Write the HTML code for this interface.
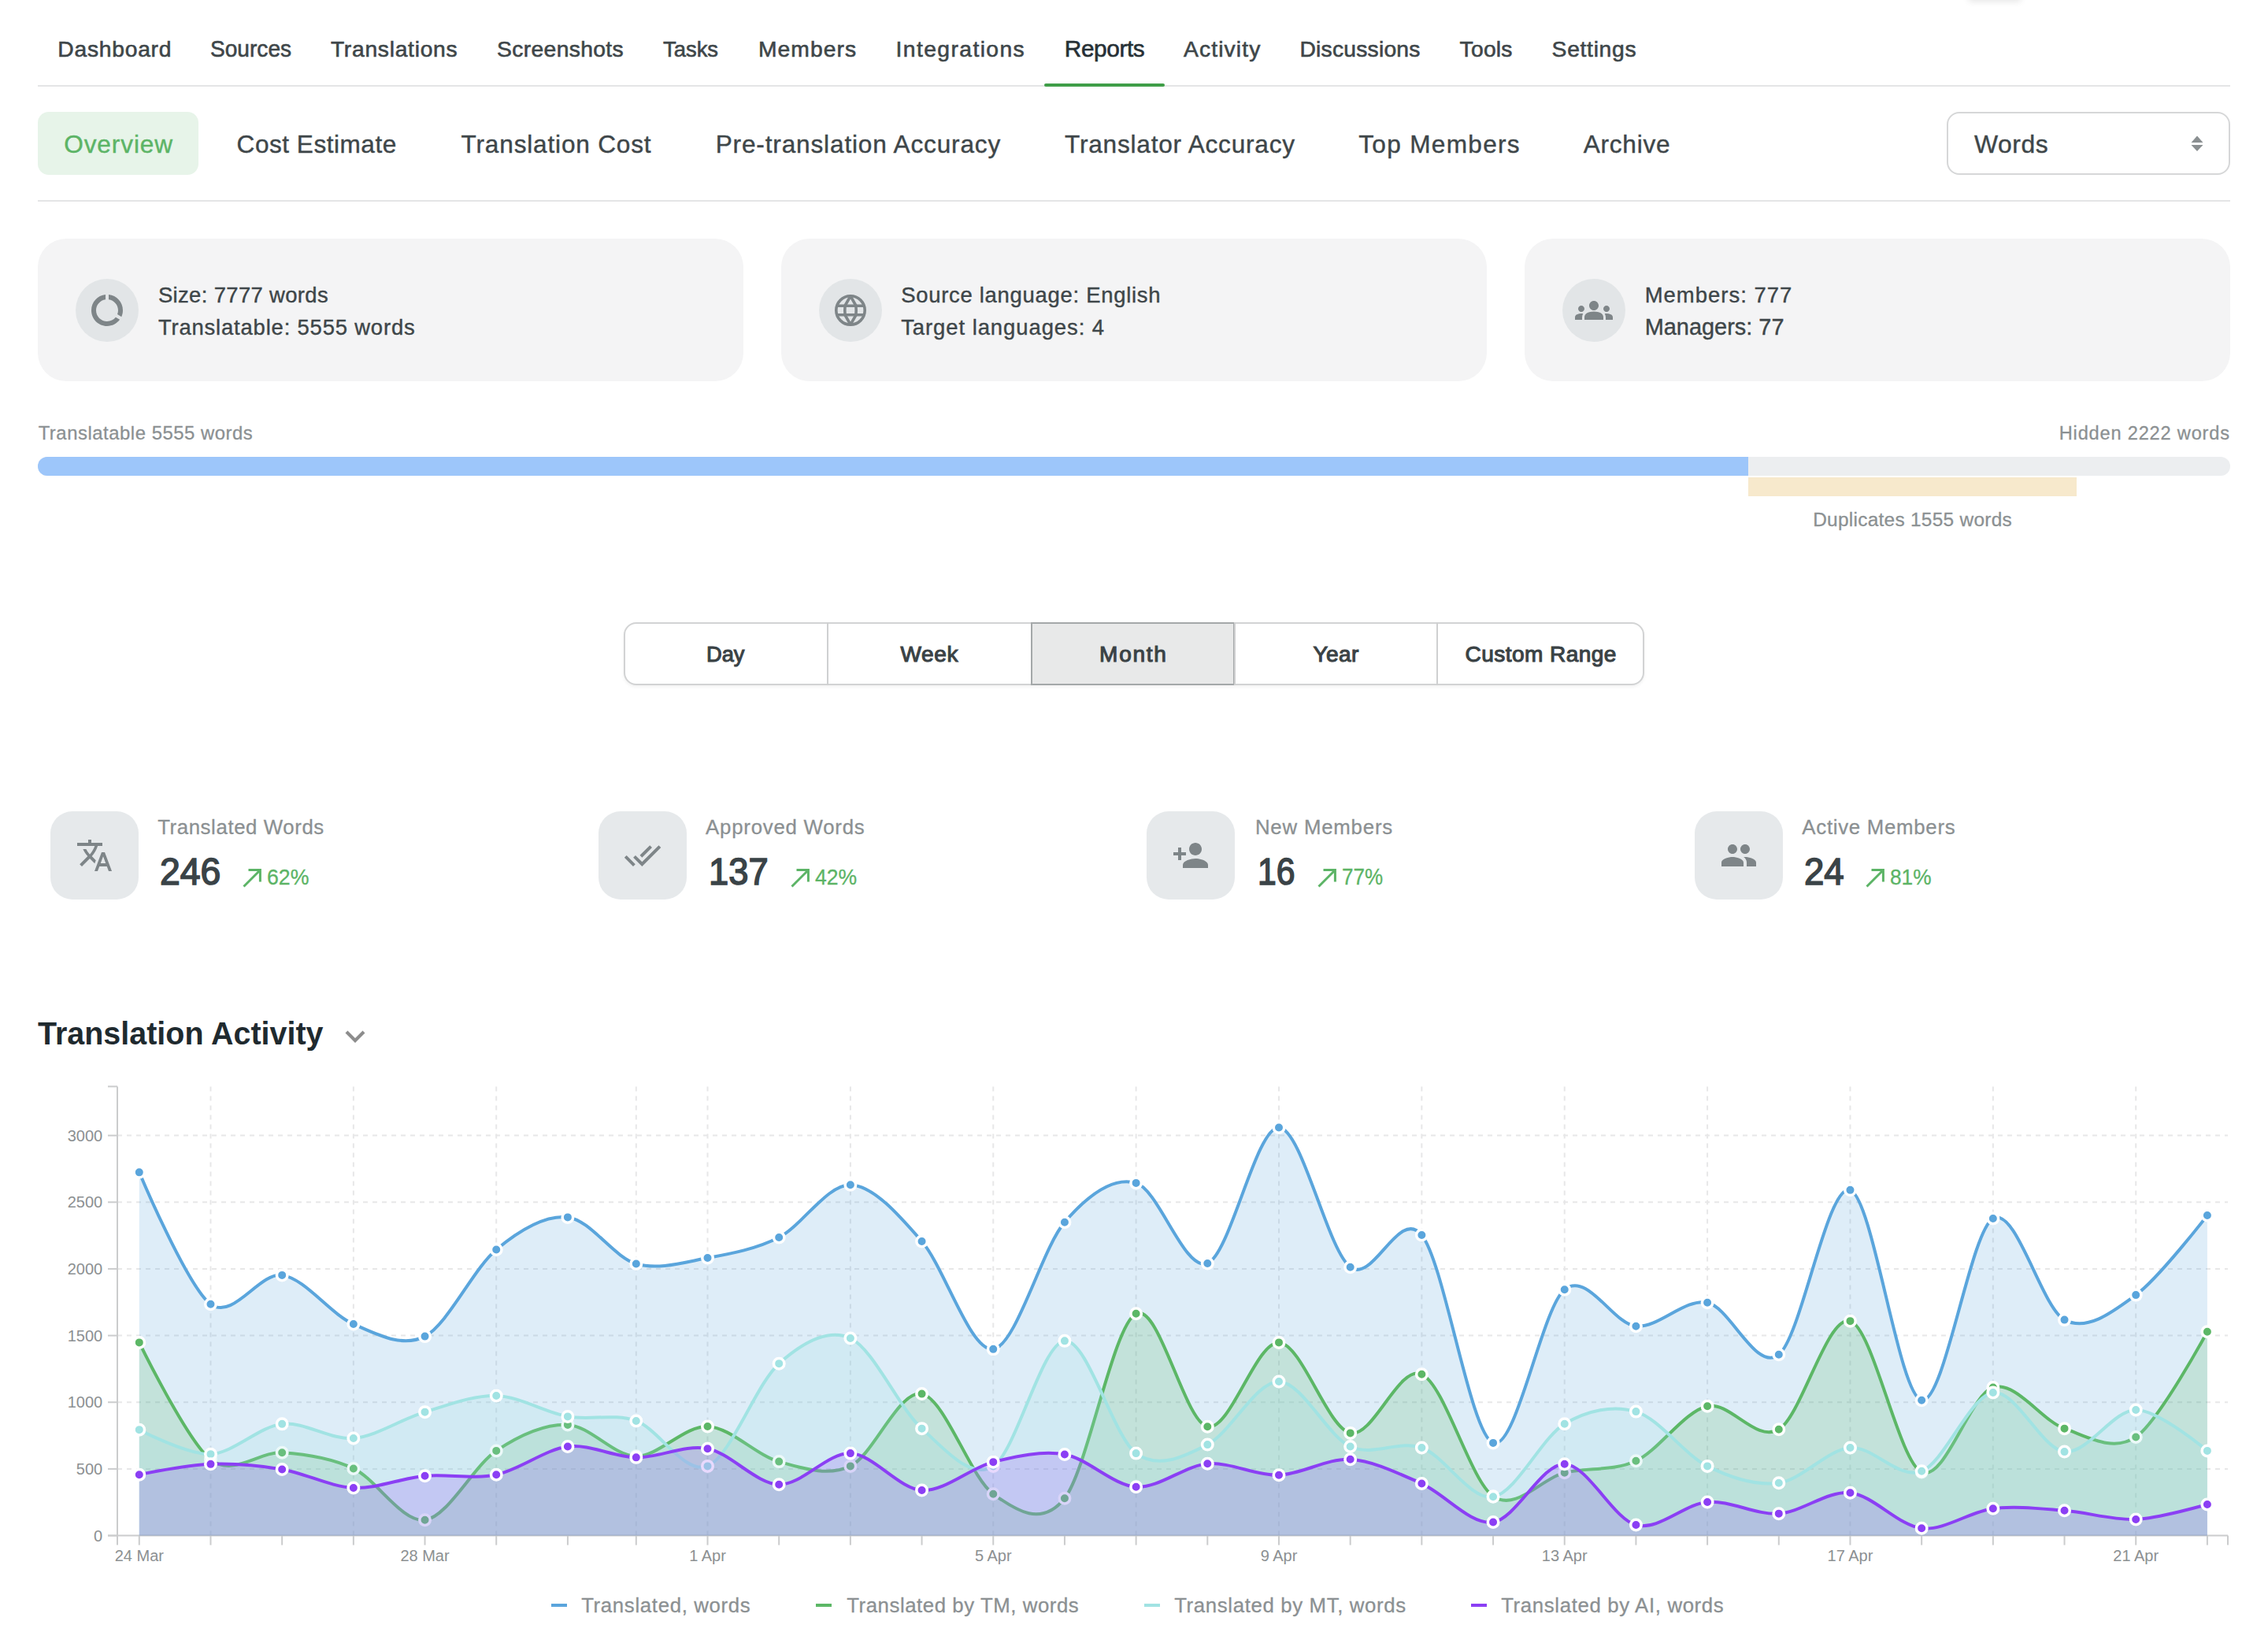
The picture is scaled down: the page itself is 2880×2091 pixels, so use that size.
<!DOCTYPE html>
<html><head><meta charset="utf-8"><style>
html,body{margin:0;padding:0;background:#fff;width:2880px;height:2091px;overflow:hidden}
body{position:relative;font-family:"Liberation Sans",sans-serif}
.t{position:absolute;white-space:nowrap}
.bx{position:absolute;display:block}
</style></head><body>
<div class="bx" style="left:2500px;top:-40px;width:66px;height:40px;background:#fff;box-shadow:0 2px 8px rgba(0,0,0,0.10)"></div>
<div class="t" style="left:73.30px;top:47.86px;font-size:28.28px;line-height:28.28px;letter-spacing:0.734px;color:#3e4649;font-weight:400;-webkit-text-stroke:0.60px #3e4649;">Dashboard</div>
<div class="t" style="left:267.30px;top:46.82px;font-size:29.37px;line-height:29.37px;letter-spacing:0.000px;color:#3e4649;font-weight:400;-webkit-text-stroke:0.60px #3e4649;transform:scaleX(0.9570);transform-origin:0.00px 0;">Sources</div>
<div class="t" style="left:419.90px;top:47.86px;font-size:28.28px;line-height:28.28px;letter-spacing:0.712px;color:#3e4649;font-weight:400;-webkit-text-stroke:0.60px #3e4649;">Translations</div>
<div class="t" style="left:631.10px;top:47.86px;font-size:28.28px;line-height:28.28px;letter-spacing:0.341px;color:#3e4649;font-weight:400;-webkit-text-stroke:0.60px #3e4649;">Screenshots</div>
<div class="t" style="left:842.30px;top:47.86px;font-size:28.28px;line-height:28.28px;letter-spacing:0.000px;color:#3e4649;font-weight:400;-webkit-text-stroke:0.60px #3e4649;transform:scaleX(0.9699);transform-origin:0.00px 0;">Tasks</div>
<div class="t" style="left:962.90px;top:47.86px;font-size:28.28px;line-height:28.28px;letter-spacing:1.091px;color:#3e4649;font-weight:400;-webkit-text-stroke:0.60px #3e4649;">Members</div>
<div class="t" style="left:1137.50px;top:47.86px;font-size:28.28px;line-height:28.28px;letter-spacing:1.412px;color:#3e4649;font-weight:400;-webkit-text-stroke:0.60px #3e4649;">Integrations</div>
<div class="t" style="left:1351.80px;top:46.60px;font-size:29.80px;line-height:29.80px;letter-spacing:-0.403px;color:#263035;font-weight:400;-webkit-text-stroke:0.60px #263035;">Reports</div>
<div class="t" style="left:1502.90px;top:47.86px;font-size:28.28px;line-height:28.28px;letter-spacing:1.136px;color:#3e4649;font-weight:400;-webkit-text-stroke:0.60px #3e4649;">Activity</div>
<div class="t" style="left:1650.40px;top:47.86px;font-size:28.28px;line-height:28.28px;letter-spacing:0.225px;color:#3e4649;font-weight:400;-webkit-text-stroke:0.60px #3e4649;">Discussions</div>
<div class="t" style="left:1853.60px;top:47.86px;font-size:28.28px;line-height:28.28px;letter-spacing:0.226px;color:#3e4649;font-weight:400;-webkit-text-stroke:0.60px #3e4649;">Tools</div>
<div class="t" style="left:1970.60px;top:47.86px;font-size:28.28px;line-height:28.28px;letter-spacing:0.691px;color:#3e4649;font-weight:400;-webkit-text-stroke:0.60px #3e4649;">Settings</div>
<div class="bx" style="left:48px;top:107.5px;width:2784px;height:2px;background:#e4e5e6"></div>
<div class="bx" style="left:1326px;top:105.8px;width:152.7px;height:4px;background:#3f9e48;border-radius:2px"></div>
<div class="bx" style="left:48px;top:142px;width:204px;height:80px;background:#e7f4e9;border-radius:14px"></div>
<div class="t" style="left:81.20px;top:167.81px;font-size:31.59px;line-height:31.59px;letter-spacing:0.898px;color:#5cb466;font-weight:400;-webkit-text-stroke:0.40px #5cb466;">Overview</div>
<div class="t" style="left:300.60px;top:167.81px;font-size:31.59px;line-height:31.59px;letter-spacing:0.509px;color:#3e4649;font-weight:400;-webkit-text-stroke:0.40px #3e4649;">Cost Estimate</div>
<div class="t" style="left:585.60px;top:167.81px;font-size:31.59px;line-height:31.59px;letter-spacing:0.819px;color:#3e4649;font-weight:400;-webkit-text-stroke:0.40px #3e4649;">Translation Cost</div>
<div class="t" style="left:908.70px;top:167.81px;font-size:31.59px;line-height:31.59px;letter-spacing:0.842px;color:#3e4649;font-weight:400;-webkit-text-stroke:0.40px #3e4649;">Pre-translation Accuracy</div>
<div class="t" style="left:1352.00px;top:167.81px;font-size:31.59px;line-height:31.59px;letter-spacing:0.787px;color:#3e4649;font-weight:400;-webkit-text-stroke:0.40px #3e4649;">Translator Accuracy</div>
<div class="t" style="left:1725.20px;top:167.81px;font-size:31.59px;line-height:31.59px;letter-spacing:1.315px;color:#3e4649;font-weight:400;-webkit-text-stroke:0.40px #3e4649;">Top Members</div>
<div class="t" style="left:2010.70px;top:167.81px;font-size:31.59px;line-height:31.59px;letter-spacing:0.760px;color:#3e4649;font-weight:400;-webkit-text-stroke:0.40px #3e4649;">Archive</div>
<div class="bx" style="left:2472px;top:142px;width:360px;height:80px;box-sizing:border-box;border:2px solid #d6d7d8;border-radius:16px;background:#fff"></div>
<div class="t" style="left:2506.90px;top:167.77px;font-size:31.86px;line-height:31.86px;letter-spacing:0.606px;color:#3e4649;font-weight:400;-webkit-text-stroke:0.40px #3e4649;">Words</div>
<svg class="bx" style="left:2780px;top:170px" width="20" height="24" viewBox="0 0 20 24"><path d="M2.5 11 L10 2.5 L17.5 11Z M2.5 14 L10 22 L17.5 14Z" fill="#8a8f91"/></svg>
<div class="bx" style="left:48px;top:253.5px;width:2784px;height:2px;background:#e4e5e6"></div>
<div class="bx" style="left:48px;top:302.5px;width:896px;height:181.5px;background:#f4f4f5;border-radius:36px"></div>
<div class="bx" style="left:96px;top:354px;width:80px;height:80px;background:#e2e5e7;border-radius:50%"></div>
<div class="bx" style="left:992px;top:302.5px;width:896px;height:181.5px;background:#f4f4f5;border-radius:36px"></div>
<div class="bx" style="left:1040px;top:354px;width:80px;height:80px;background:#e2e5e7;border-radius:50%"></div>
<div class="bx" style="left:1936px;top:302.5px;width:896px;height:181.5px;background:#f4f4f5;border-radius:36px"></div>
<div class="bx" style="left:1984px;top:354px;width:80px;height:80px;background:#e2e5e7;border-radius:50%"></div>
<svg class="bx" style="left:112px;top:370px" width="48" height="48" viewBox="0 0 24 24"><path fill="#7e8588" d="M13 2.05v3.03c3.39.49 6 3.39 6 6.92 0 .9-.18 1.75-.48 2.54l2.6 1.53c.56-1.24.88-2.62.88-4.07 0-5.18-3.95-9.45-9-9.95zM12 19c-3.87 0-7-3.13-7-7 0-3.53 2.61-6.43 6-6.92V2.05c-5.06.5-9 4.76-9 9.95 0 5.52 4.47 10 9.99 10 3.31 0 6.24-1.61 8.06-4.09l-2.6-1.53C16.17 17.98 14.21 19 12 19z"/></svg>
<svg class="bx" style="left:1056px;top:370px" width="48" height="48" viewBox="0 0 48 48"><g fill="none" stroke="#7e8588" stroke-width="3.6"><circle cx="24" cy="24" r="18.2"/><path d="M24 5.8 L17.1 18 Q16.5 24 17.1 30 L24 42.2 L30.9 30 Q31.5 24 30.9 18 Z" stroke-linejoin="round"/><path d="M7 18.2H41M7 29.8H41"/></g></svg>
<svg class="bx" style="left:2000px;top:370px" width="48" height="48" viewBox="0 0 24 24"><path fill="#7e8588" d="M12 12.75c1.63 0 3.07.39 4.24.9 1.08.48 1.76 1.56 1.76 2.73V18H6v-1.61c0-1.18.68-2.26 1.76-2.73 1.17-.52 2.61-.91 4.24-.91zM4 13c1.1 0 2-.9 2-2s-.9-2-2-2-2 .9-2 2 .9 2 2 2zm1.13 1.1c-.37-.06-.74-.1-1.13-.1-.99 0-1.93.21-2.78.58C.48 14.9 0 15.62 0 16.43V18h4.5v-1.61c0-.83.23-1.61.63-2.29zM20 13c1.1 0 2-.9 2-2s-.9-2-2-2-2 .9-2 2 .9 2 2 2zm4 3.43c0-.81-.48-1.53-1.22-1.85-.85-.37-1.79-.58-2.78-.58-.39 0-.76.04-1.13.1.4.68.63 1.46.63 2.29V18H24v-1.57zM12 6c1.66 0 3 1.34 3 3s-1.34 3-3 3-3-1.34-3-3 1.34-3 3-3z"/></svg>
<div class="t" style="left:200.90px;top:360.58px;font-size:27.45px;line-height:27.45px;letter-spacing:0.356px;color:#3e4649;font-weight:400;-webkit-text-stroke:0.40px #3e4649;">Size: 7777 words</div>
<div class="t" style="left:200.90px;top:402.38px;font-size:27.45px;line-height:27.45px;letter-spacing:0.814px;color:#3e4649;font-weight:400;-webkit-text-stroke:0.40px #3e4649;">Translatable: 5555 words</div>
<div class="t" style="left:1144.20px;top:360.58px;font-size:27.45px;line-height:27.45px;letter-spacing:0.721px;color:#3e4649;font-weight:400;-webkit-text-stroke:0.40px #3e4649;">Source language: English</div>
<div class="t" style="left:1144.20px;top:402.38px;font-size:27.45px;line-height:27.45px;letter-spacing:0.939px;color:#3e4649;font-weight:400;-webkit-text-stroke:0.40px #3e4649;">Target languages: 4</div>
<div class="t" style="left:2088.70px;top:360.58px;font-size:27.45px;line-height:27.45px;letter-spacing:1.014px;color:#3e4649;font-weight:400;-webkit-text-stroke:0.40px #3e4649;">Members: 777</div>
<div class="t" style="left:2088.70px;top:401.14px;font-size:28.92px;line-height:28.92px;letter-spacing:0.002px;color:#3e4649;font-weight:400;-webkit-text-stroke:0.40px #3e4649;">Managers: 77</div>
<div class="t" style="left:48.65px;top:538.22px;font-size:23.86px;line-height:23.86px;letter-spacing:0.535px;color:#8b9092;font-weight:400;-webkit-text-stroke:0.30px #8b9092;">Translatable 5555 words</div>
<div class="t" style="left:2614.75px;top:539.06px;font-size:23.59px;line-height:23.59px;letter-spacing:0.816px;color:#8b9092;font-weight:400;-webkit-text-stroke:0.30px #8b9092;">Hidden 2222 words</div>
<div class="bx" style="left:48px;top:580px;width:2784px;height:24px;background:#eceef0;border-radius:12px"></div>
<div class="bx" style="left:48px;top:580px;width:2172px;height:24px;background:#9dc6fa;border-radius:12px 0 0 12px"></div>
<div class="bx" style="left:2220px;top:606px;width:417px;height:24px;background:#f7e9cc"></div>
<div class="t" style="left:2302.15px;top:648.14px;font-size:24.41px;line-height:24.41px;letter-spacing:0.285px;color:#8b9092;font-weight:400;-webkit-text-stroke:0.30px #8b9092;">Duplicates 1555 words</div>
<div class="bx" style="left:792px;top:790px;width:1296px;height:80px;box-sizing:border-box;border:2px solid #d2d3d4;border-radius:16px;background:#fff;box-shadow:0 2px 4px rgba(0,0,0,0.06)"></div>
<div class="bx" style="left:1309px;top:790px;width:259px;height:80px;box-sizing:border-box;border:2px solid #a4a8a9;background:#e8e9e9"></div>
<div class="bx" style="left:1050px;top:790px;width:2px;height:80px;background:#cfd0d1"></div>
<div class="bx" style="left:1567px;top:790px;width:2px;height:80px;background:#cfd0d1"></div>
<div class="bx" style="left:1824px;top:790px;width:2px;height:80px;background:#cfd0d1"></div>
<div class="t" style="left:897.30px;top:816.92px;font-size:28.05px;line-height:28.05px;letter-spacing:0.000px;color:#3a4245;font-weight:400;-webkit-text-stroke:1.10px #3a4245;transform:scaleX(0.9704);transform-origin:0.00px 0;">Day</div>
<div class="t" style="left:1143.42px;top:816.92px;font-size:28.05px;line-height:28.05px;letter-spacing:0.634px;color:#3a4245;font-weight:400;-webkit-text-stroke:1.10px #3a4245;">Week</div>
<div class="t" style="left:1396.10px;top:816.92px;font-size:28.05px;line-height:28.05px;letter-spacing:1.711px;color:#3a4245;font-weight:400;-webkit-text-stroke:1.10px #3a4245;">Month</div>
<div class="t" style="left:1667.51px;top:816.92px;font-size:28.05px;line-height:28.05px;letter-spacing:0.429px;color:#3a4245;font-weight:400;-webkit-text-stroke:1.10px #3a4245;">Year</div>
<div class="t" style="left:1860.50px;top:816.92px;font-size:28.05px;line-height:28.05px;letter-spacing:0.445px;color:#3a4245;font-weight:400;-webkit-text-stroke:1.10px #3a4245;">Custom Range</div>
<div class="bx" style="left:64px;top:1030px;width:112px;height:112px;background:#e6e9eb;border-radius:28px"></div>
<div class="bx" style="left:760px;top:1030px;width:112px;height:112px;background:#e6e9eb;border-radius:28px"></div>
<div class="bx" style="left:1456px;top:1030px;width:112px;height:112px;background:#e6e9eb;border-radius:28px"></div>
<div class="bx" style="left:2152px;top:1030px;width:112px;height:112px;background:#e6e9eb;border-radius:28px"></div>
<svg class="bx" style="left:96px;top:1062px" width="48" height="48" viewBox="0 0 24 24"><path fill="#7e8588" d="M12.87 15.07l-2.54-2.51.03-.03c1.74-1.94 2.98-4.17 3.71-6.53H17V4h-7V2H8v2H1v1.99h11.17C11.5 7.92 10.44 9.75 9 11.35 8.07 10.32 7.3 9.19 6.69 8h-2c.73 1.63 1.73 3.17 2.98 4.56l-5.09 5.02L4 19l5-5 3.11 3.11.76-2.04zM18.5 10h-2L12 22h2l1.12-3h4.75L21 22h2l-4.5-12zm-2.62 7l1.62-4.33L19.12 17h-3.24z"/></svg>
<svg class="bx" style="left:792px;top:1062px" width="48" height="48" viewBox="0 0 24 24"><path fill="#7e8588" d="M18 7l-1.41-1.41-6.34 6.34 1.41 1.41L18 7zm4.24-1.41L11.66 16.17 7.48 12l-1.41 1.41L11.66 19l12-12-1.42-1.41zM.41 13.41L6 19l1.41-1.41L1.83 12 .41 13.41z"/></svg>
<svg class="bx" style="left:1488px;top:1062px" width="48" height="48" viewBox="0 0 24 24"><path fill="#7e8588" d="M15 12c2.21 0 4-1.79 4-4s-1.79-4-4-4-4 1.79-4 4 1.79 4 4 4zm-9-2V7H4v3H1v2h3v3h2v-3h3v-2H6zm9 4c-2.67 0-8 1.34-8 4v2h16v-2c0-2.66-5.33-4-8-4z"/></svg>
<svg class="bx" style="left:2184px;top:1062px" width="48" height="48" viewBox="0 0 24 24"><path fill="#7e8588" d="M16 11c1.66 0 2.99-1.34 2.99-3S17.66 5 16 5c-1.66 0-3 1.34-3 3s1.34 3 3 3zm-8 0c1.66 0 2.99-1.34 2.99-3S9.66 5 8 5C6.34 5 5 6.34 5 8s1.34 3 3 3zm0 2c-2.33 0-7 1.17-7 3.5V19h14v-2.5c0-2.33-4.67-3.5-7-3.5zm8 0c-.29 0-.62.02-.97.05 1.16.84 1.97 1.97 1.97 3.45V19h6v-2.5c0-2.33-4.67-3.5-7-3.5z"/></svg>
<div class="t" style="left:200.15px;top:1037.95px;font-size:25.79px;line-height:25.79px;letter-spacing:0.606px;color:#8b9092;font-weight:400;-webkit-text-stroke:0.30px #8b9092;">Translated Words</div>
<div class="t" style="left:202.50px;top:1082.72px;font-size:47.56px;line-height:47.56px;letter-spacing:0.000px;color:#3a4347;font-weight:400;-webkit-text-stroke:1.60px #3a4347;transform:scaleX(0.9756);transform-origin:0.00px 0;">246</div>
<svg class="bx" style="left:306.9px;top:1101px" width="26" height="26" viewBox="0 0 26 26"><path d="M2.5 24.5 L23 4 M8.5 3.6 H23.4 V18.5" fill="none" stroke="#5cb466" stroke-width="3"/></svg>
<div class="t" style="left:339.35px;top:1098.59px;font-size:28.51px;line-height:28.51px;letter-spacing:0.000px;color:#5cb466;font-weight:400;-webkit-text-stroke:0.30px #5cb466;transform:scaleX(0.9378);transform-origin:0.00px 0;">62%</div>
<div class="t" style="left:896.05px;top:1037.95px;font-size:25.79px;line-height:25.79px;letter-spacing:0.781px;color:#8b9092;font-weight:400;-webkit-text-stroke:0.30px #8b9092;">Approved Words</div>
<div class="t" style="left:900.40px;top:1082.72px;font-size:47.56px;line-height:47.56px;letter-spacing:0.000px;color:#3a4347;font-weight:400;-webkit-text-stroke:1.60px #3a4347;transform:scaleX(0.9529);transform-origin:0.00px 0;">137</div>
<svg class="bx" style="left:1003.4px;top:1101px" width="26" height="26" viewBox="0 0 26 26"><path d="M2.5 24.5 L23 4 M8.5 3.6 H23.4 V18.5" fill="none" stroke="#5cb466" stroke-width="3"/></svg>
<div class="t" style="left:1035.15px;top:1098.59px;font-size:28.51px;line-height:28.51px;letter-spacing:0.000px;color:#5cb466;font-weight:400;-webkit-text-stroke:0.30px #5cb466;transform:scaleX(0.9325);transform-origin:0.00px 0;">42%</div>
<div class="t" style="left:1593.95px;top:1037.95px;font-size:25.79px;line-height:25.79px;letter-spacing:0.804px;color:#8b9092;font-weight:400;-webkit-text-stroke:0.30px #8b9092;">New Members</div>
<div class="t" style="left:1596.70px;top:1082.72px;font-size:47.56px;line-height:47.56px;letter-spacing:0.000px;color:#3a4347;font-weight:400;-webkit-text-stroke:1.60px #3a4347;transform:scaleX(0.8981);transform-origin:0.00px 0;">16</div>
<svg class="bx" style="left:1671.6px;top:1101px" width="26" height="26" viewBox="0 0 26 26"><path d="M2.5 24.5 L23 4 M8.5 3.6 H23.4 V18.5" fill="none" stroke="#5cb466" stroke-width="3"/></svg>
<div class="t" style="left:1704.45px;top:1098.51px;font-size:28.67px;line-height:28.67px;letter-spacing:0.000px;color:#5cb466;font-weight:400;-webkit-text-stroke:0.30px #5cb466;transform:scaleX(0.9080);transform-origin:0.00px 0;">77%</div>
<div class="t" style="left:2288.35px;top:1037.95px;font-size:25.79px;line-height:25.79px;letter-spacing:0.730px;color:#8b9092;font-weight:400;-webkit-text-stroke:0.30px #8b9092;">Active Members</div>
<div class="t" style="left:2290.60px;top:1082.72px;font-size:47.56px;line-height:47.56px;letter-spacing:0.000px;color:#3a4347;font-weight:400;-webkit-text-stroke:1.60px #3a4347;transform:scaleX(0.9586);transform-origin:0.00px 0;">24</div>
<svg class="bx" style="left:2367.6px;top:1101px" width="26" height="26" viewBox="0 0 26 26"><path d="M2.5 24.5 L23 4 M8.5 3.6 H23.4 V18.5" fill="none" stroke="#5cb466" stroke-width="3"/></svg>
<div class="t" style="left:2399.95px;top:1098.59px;font-size:28.51px;line-height:28.51px;letter-spacing:0.000px;color:#5cb466;font-weight:400;-webkit-text-stroke:0.30px #5cb466;transform:scaleX(0.9220);transform-origin:0.00px 0;">81%</div>
<div class="t" style="left:48.10px;top:1292.36px;font-size:40.69px;line-height:40.69px;letter-spacing:0.000px;color:#1f2a2f;font-weight:700;transform:scaleX(0.9702);transform-origin:0.00px 0;">Translation Activity</div>
<svg class="bx" style="left:437px;top:1306px" width="28" height="20" viewBox="0 0 28 20"><path d="M3 4 L14 15 L25 4" fill="none" stroke="#8c8c8c" stroke-width="4.2"/></svg>
<svg class="bx" style="left:0;top:1360px" width="2880" height="700" viewBox="0 1360 2880 700">
<line x1="149.0" y1="1864.93" x2="2829.0" y2="1864.93" stroke="#e7e7e8" stroke-width="2" stroke-dasharray="6 6"/>
<line x1="149.0" y1="1780.27" x2="2829.0" y2="1780.27" stroke="#e7e7e8" stroke-width="2" stroke-dasharray="6 6"/>
<line x1="149.0" y1="1695.60" x2="2829.0" y2="1695.60" stroke="#e7e7e8" stroke-width="2" stroke-dasharray="6 6"/>
<line x1="149.0" y1="1610.93" x2="2829.0" y2="1610.93" stroke="#e7e7e8" stroke-width="2" stroke-dasharray="6 6"/>
<line x1="149.0" y1="1526.27" x2="2829.0" y2="1526.27" stroke="#e7e7e8" stroke-width="2" stroke-dasharray="6 6"/>
<line x1="149.0" y1="1441.60" x2="2829.0" y2="1441.60" stroke="#e7e7e8" stroke-width="2" stroke-dasharray="6 6"/>
<line x1="267.49" y1="1379.4" x2="267.49" y2="1949.6" stroke="#e7e7e8" stroke-width="2" stroke-dasharray="6 6"/>
<line x1="448.86" y1="1379.4" x2="448.86" y2="1949.6" stroke="#e7e7e8" stroke-width="2" stroke-dasharray="6 6"/>
<line x1="630.23" y1="1379.4" x2="630.23" y2="1949.6" stroke="#e7e7e8" stroke-width="2" stroke-dasharray="6 6"/>
<line x1="807.82" y1="1379.4" x2="807.82" y2="1949.6" stroke="#e7e7e8" stroke-width="2" stroke-dasharray="6 6"/>
<line x1="898.51" y1="1379.4" x2="898.51" y2="1949.6" stroke="#e7e7e8" stroke-width="2" stroke-dasharray="6 6"/>
<line x1="1079.88" y1="1379.4" x2="1079.88" y2="1949.6" stroke="#e7e7e8" stroke-width="2" stroke-dasharray="6 6"/>
<line x1="1261.25" y1="1379.4" x2="1261.25" y2="1949.6" stroke="#e7e7e8" stroke-width="2" stroke-dasharray="6 6"/>
<line x1="1442.62" y1="1379.4" x2="1442.62" y2="1949.6" stroke="#e7e7e8" stroke-width="2" stroke-dasharray="6 6"/>
<line x1="1623.99" y1="1379.4" x2="1623.99" y2="1949.6" stroke="#e7e7e8" stroke-width="2" stroke-dasharray="6 6"/>
<line x1="1805.36" y1="1379.4" x2="1805.36" y2="1949.6" stroke="#e7e7e8" stroke-width="2" stroke-dasharray="6 6"/>
<line x1="1986.73" y1="1379.4" x2="1986.73" y2="1949.6" stroke="#e7e7e8" stroke-width="2" stroke-dasharray="6 6"/>
<line x1="2168.10" y1="1379.4" x2="2168.10" y2="1949.6" stroke="#e7e7e8" stroke-width="2" stroke-dasharray="6 6"/>
<line x1="2349.47" y1="1379.4" x2="2349.47" y2="1949.6" stroke="#e7e7e8" stroke-width="2" stroke-dasharray="6 6"/>
<line x1="2530.84" y1="1379.4" x2="2530.84" y2="1949.6" stroke="#e7e7e8" stroke-width="2" stroke-dasharray="6 6"/>
<line x1="2712.21" y1="1379.4" x2="2712.21" y2="1949.6" stroke="#e7e7e8" stroke-width="2" stroke-dasharray="6 6"/>
<line x1="149.0" y1="1379.4" x2="149.0" y2="1961.6" stroke="#cbcccd" stroke-width="2"/>
<line x1="137.0" y1="1949.6" x2="2829.0" y2="1949.6" stroke="#cbcccd" stroke-width="2"/>
<line x1="137.0" y1="1949.60" x2="149.0" y2="1949.60" stroke="#cbcccd" stroke-width="2"/>
<line x1="137.0" y1="1864.93" x2="149.0" y2="1864.93" stroke="#cbcccd" stroke-width="2"/>
<line x1="137.0" y1="1780.27" x2="149.0" y2="1780.27" stroke="#cbcccd" stroke-width="2"/>
<line x1="137.0" y1="1695.60" x2="149.0" y2="1695.60" stroke="#cbcccd" stroke-width="2"/>
<line x1="137.0" y1="1610.93" x2="149.0" y2="1610.93" stroke="#cbcccd" stroke-width="2"/>
<line x1="137.0" y1="1526.27" x2="149.0" y2="1526.27" stroke="#cbcccd" stroke-width="2"/>
<line x1="137.0" y1="1441.60" x2="149.0" y2="1441.60" stroke="#cbcccd" stroke-width="2"/>
<line x1="137.0" y1="1379.40" x2="149.0" y2="1379.40" stroke="#cbcccd" stroke-width="2"/>
<line x1="176.80" y1="1949.6" x2="176.80" y2="1961.6" stroke="#cbcccd" stroke-width="2"/>
<line x1="267.49" y1="1949.6" x2="267.49" y2="1961.6" stroke="#cbcccd" stroke-width="2"/>
<line x1="358.17" y1="1949.6" x2="358.17" y2="1961.6" stroke="#cbcccd" stroke-width="2"/>
<line x1="448.86" y1="1949.6" x2="448.86" y2="1961.6" stroke="#cbcccd" stroke-width="2"/>
<line x1="539.54" y1="1949.6" x2="539.54" y2="1961.6" stroke="#cbcccd" stroke-width="2"/>
<line x1="630.23" y1="1949.6" x2="630.23" y2="1961.6" stroke="#cbcccd" stroke-width="2"/>
<line x1="720.91" y1="1949.6" x2="720.91" y2="1961.6" stroke="#cbcccd" stroke-width="2"/>
<line x1="807.82" y1="1949.6" x2="807.82" y2="1961.6" stroke="#cbcccd" stroke-width="2"/>
<line x1="898.51" y1="1949.6" x2="898.51" y2="1961.6" stroke="#cbcccd" stroke-width="2"/>
<line x1="989.19" y1="1949.6" x2="989.19" y2="1961.6" stroke="#cbcccd" stroke-width="2"/>
<line x1="1079.88" y1="1949.6" x2="1079.88" y2="1961.6" stroke="#cbcccd" stroke-width="2"/>
<line x1="1170.56" y1="1949.6" x2="1170.56" y2="1961.6" stroke="#cbcccd" stroke-width="2"/>
<line x1="1261.25" y1="1949.6" x2="1261.25" y2="1961.6" stroke="#cbcccd" stroke-width="2"/>
<line x1="1351.93" y1="1949.6" x2="1351.93" y2="1961.6" stroke="#cbcccd" stroke-width="2"/>
<line x1="1442.62" y1="1949.6" x2="1442.62" y2="1961.6" stroke="#cbcccd" stroke-width="2"/>
<line x1="1533.30" y1="1949.6" x2="1533.30" y2="1961.6" stroke="#cbcccd" stroke-width="2"/>
<line x1="1623.99" y1="1949.6" x2="1623.99" y2="1961.6" stroke="#cbcccd" stroke-width="2"/>
<line x1="1714.67" y1="1949.6" x2="1714.67" y2="1961.6" stroke="#cbcccd" stroke-width="2"/>
<line x1="1805.36" y1="1949.6" x2="1805.36" y2="1961.6" stroke="#cbcccd" stroke-width="2"/>
<line x1="1896.05" y1="1949.6" x2="1896.05" y2="1961.6" stroke="#cbcccd" stroke-width="2"/>
<line x1="1986.73" y1="1949.6" x2="1986.73" y2="1961.6" stroke="#cbcccd" stroke-width="2"/>
<line x1="2077.42" y1="1949.6" x2="2077.42" y2="1961.6" stroke="#cbcccd" stroke-width="2"/>
<line x1="2168.10" y1="1949.6" x2="2168.10" y2="1961.6" stroke="#cbcccd" stroke-width="2"/>
<line x1="2258.79" y1="1949.6" x2="2258.79" y2="1961.6" stroke="#cbcccd" stroke-width="2"/>
<line x1="2349.47" y1="1949.6" x2="2349.47" y2="1961.6" stroke="#cbcccd" stroke-width="2"/>
<line x1="2440.16" y1="1949.6" x2="2440.16" y2="1961.6" stroke="#cbcccd" stroke-width="2"/>
<line x1="2530.84" y1="1949.6" x2="2530.84" y2="1961.6" stroke="#cbcccd" stroke-width="2"/>
<line x1="2621.53" y1="1949.6" x2="2621.53" y2="1961.6" stroke="#cbcccd" stroke-width="2"/>
<line x1="2712.21" y1="1949.6" x2="2712.21" y2="1961.6" stroke="#cbcccd" stroke-width="2"/>
<line x1="2802.90" y1="1949.6" x2="2802.90" y2="1961.6" stroke="#cbcccd" stroke-width="2"/>
<line x1="2829.0" y1="1949.6" x2="2829.0" y2="1961.6" stroke="#cbcccd" stroke-width="2"/>
<path d="M176.80 1488.34 C176.80 1488.34 238.47 1634.92 267.49 1655.81 C296.50 1676.70 329.15 1614.86 358.17 1618.89 C387.19 1622.93 419.84 1668.60 448.86 1681.04 C477.88 1693.47 510.52 1711.73 539.54 1696.62 C568.56 1681.50 601.21 1610.74 630.23 1586.55 C659.25 1562.35 692.50 1542.53 720.91 1545.40 C749.33 1548.27 779.40 1596.24 807.82 1604.50 C836.23 1612.76 869.49 1602.41 898.51 1597.05 C927.52 1591.68 960.17 1585.82 989.19 1570.97 C1018.21 1556.12 1050.86 1503.44 1079.88 1504.25 C1108.90 1505.07 1141.54 1542.67 1170.56 1576.05 C1199.58 1609.43 1232.23 1716.77 1261.25 1712.87 C1290.27 1708.97 1322.91 1585.42 1351.93 1551.67 C1380.95 1517.91 1413.60 1493.51 1442.62 1501.88 C1471.64 1510.25 1504.28 1615.26 1533.30 1603.99 C1562.32 1592.72 1594.97 1430.68 1623.99 1431.44 C1653.01 1432.20 1685.66 1586.89 1714.67 1608.73 C1743.69 1630.57 1776.34 1532.21 1805.36 1567.92 C1834.38 1603.63 1867.03 1820.83 1896.05 1831.91 C1925.06 1842.99 1957.71 1660.89 1986.73 1637.18 C2015.75 1613.47 2048.40 1681.09 2077.42 1683.75 C2106.44 1686.40 2139.08 1648.00 2168.10 1653.77 C2197.12 1659.55 2229.77 1742.68 2258.79 1719.81 C2287.81 1696.95 2320.45 1501.59 2349.47 1510.86 C2378.49 1520.12 2411.14 1771.96 2440.16 1777.73 C2469.18 1783.50 2501.82 1563.26 2530.84 1546.93 C2559.86 1530.59 2592.51 1660.07 2621.53 1675.62 C2650.55 1691.17 2683.20 1665.34 2712.21 1644.12 C2741.23 1622.91 2802.90 1543.03 2802.90 1543.03 L2802.90 1949.60 L176.80 1949.60 Z" fill="#5aa5dc" fill-opacity="0.2"/>
<path d="M176.80 1488.34 C176.80 1488.34 238.47 1634.92 267.49 1655.81 C296.50 1676.70 329.15 1614.86 358.17 1618.89 C387.19 1622.93 419.84 1668.60 448.86 1681.04 C477.88 1693.47 510.52 1711.73 539.54 1696.62 C568.56 1681.50 601.21 1610.74 630.23 1586.55 C659.25 1562.35 692.50 1542.53 720.91 1545.40 C749.33 1548.27 779.40 1596.24 807.82 1604.50 C836.23 1612.76 869.49 1602.41 898.51 1597.05 C927.52 1591.68 960.17 1585.82 989.19 1570.97 C1018.21 1556.12 1050.86 1503.44 1079.88 1504.25 C1108.90 1505.07 1141.54 1542.67 1170.56 1576.05 C1199.58 1609.43 1232.23 1716.77 1261.25 1712.87 C1290.27 1708.97 1322.91 1585.42 1351.93 1551.67 C1380.95 1517.91 1413.60 1493.51 1442.62 1501.88 C1471.64 1510.25 1504.28 1615.26 1533.30 1603.99 C1562.32 1592.72 1594.97 1430.68 1623.99 1431.44 C1653.01 1432.20 1685.66 1586.89 1714.67 1608.73 C1743.69 1630.57 1776.34 1532.21 1805.36 1567.92 C1834.38 1603.63 1867.03 1820.83 1896.05 1831.91 C1925.06 1842.99 1957.71 1660.89 1986.73 1637.18 C2015.75 1613.47 2048.40 1681.09 2077.42 1683.75 C2106.44 1686.40 2139.08 1648.00 2168.10 1653.77 C2197.12 1659.55 2229.77 1742.68 2258.79 1719.81 C2287.81 1696.95 2320.45 1501.59 2349.47 1510.86 C2378.49 1520.12 2411.14 1771.96 2440.16 1777.73 C2469.18 1783.50 2501.82 1563.26 2530.84 1546.93 C2559.86 1530.59 2592.51 1660.07 2621.53 1675.62 C2650.55 1691.17 2683.20 1665.34 2712.21 1644.12 C2741.23 1622.91 2802.90 1543.03 2802.90 1543.03" fill="none" stroke="#5aa5dc" stroke-width="4" stroke-linejoin="round"/>
<circle cx="176.80" cy="1488.34" r="6.75" fill="#5aa5dc" stroke="#fff" stroke-width="3.5"/>
<circle cx="267.49" cy="1655.81" r="6.75" fill="#5aa5dc" stroke="#fff" stroke-width="3.5"/>
<circle cx="358.17" cy="1618.89" r="6.75" fill="#5aa5dc" stroke="#fff" stroke-width="3.5"/>
<circle cx="448.86" cy="1681.04" r="6.75" fill="#5aa5dc" stroke="#fff" stroke-width="3.5"/>
<circle cx="539.54" cy="1696.62" r="6.75" fill="#5aa5dc" stroke="#fff" stroke-width="3.5"/>
<circle cx="630.23" cy="1586.55" r="6.75" fill="#5aa5dc" stroke="#fff" stroke-width="3.5"/>
<circle cx="720.91" cy="1545.40" r="6.75" fill="#5aa5dc" stroke="#fff" stroke-width="3.5"/>
<circle cx="807.82" cy="1604.50" r="6.75" fill="#5aa5dc" stroke="#fff" stroke-width="3.5"/>
<circle cx="898.51" cy="1597.05" r="6.75" fill="#5aa5dc" stroke="#fff" stroke-width="3.5"/>
<circle cx="989.19" cy="1570.97" r="6.75" fill="#5aa5dc" stroke="#fff" stroke-width="3.5"/>
<circle cx="1079.88" cy="1504.25" r="6.75" fill="#5aa5dc" stroke="#fff" stroke-width="3.5"/>
<circle cx="1170.56" cy="1576.05" r="6.75" fill="#5aa5dc" stroke="#fff" stroke-width="3.5"/>
<circle cx="1261.25" cy="1712.87" r="6.75" fill="#5aa5dc" stroke="#fff" stroke-width="3.5"/>
<circle cx="1351.93" cy="1551.67" r="6.75" fill="#5aa5dc" stroke="#fff" stroke-width="3.5"/>
<circle cx="1442.62" cy="1501.88" r="6.75" fill="#5aa5dc" stroke="#fff" stroke-width="3.5"/>
<circle cx="1533.30" cy="1603.99" r="6.75" fill="#5aa5dc" stroke="#fff" stroke-width="3.5"/>
<circle cx="1623.99" cy="1431.44" r="6.75" fill="#5aa5dc" stroke="#fff" stroke-width="3.5"/>
<circle cx="1714.67" cy="1608.73" r="6.75" fill="#5aa5dc" stroke="#fff" stroke-width="3.5"/>
<circle cx="1805.36" cy="1567.92" r="6.75" fill="#5aa5dc" stroke="#fff" stroke-width="3.5"/>
<circle cx="1896.05" cy="1831.91" r="6.75" fill="#5aa5dc" stroke="#fff" stroke-width="3.5"/>
<circle cx="1986.73" cy="1637.18" r="6.75" fill="#5aa5dc" stroke="#fff" stroke-width="3.5"/>
<circle cx="2077.42" cy="1683.75" r="6.75" fill="#5aa5dc" stroke="#fff" stroke-width="3.5"/>
<circle cx="2168.10" cy="1653.77" r="6.75" fill="#5aa5dc" stroke="#fff" stroke-width="3.5"/>
<circle cx="2258.79" cy="1719.81" r="6.75" fill="#5aa5dc" stroke="#fff" stroke-width="3.5"/>
<circle cx="2349.47" cy="1510.86" r="6.75" fill="#5aa5dc" stroke="#fff" stroke-width="3.5"/>
<circle cx="2440.16" cy="1777.73" r="6.75" fill="#5aa5dc" stroke="#fff" stroke-width="3.5"/>
<circle cx="2530.84" cy="1546.93" r="6.75" fill="#5aa5dc" stroke="#fff" stroke-width="3.5"/>
<circle cx="2621.53" cy="1675.62" r="6.75" fill="#5aa5dc" stroke="#fff" stroke-width="3.5"/>
<circle cx="2712.21" cy="1644.12" r="6.75" fill="#5aa5dc" stroke="#fff" stroke-width="3.5"/>
<circle cx="2802.90" cy="1543.03" r="6.75" fill="#5aa5dc" stroke="#fff" stroke-width="3.5"/>
<path d="M176.80 1704.41 C176.80 1704.41 238.47 1830.70 267.49 1853.08 C296.50 1875.46 329.15 1842.46 358.17 1844.27 C387.19 1846.09 419.84 1850.74 448.86 1864.43 C477.88 1878.11 510.52 1933.39 539.54 1929.79 C568.56 1926.18 601.21 1861.25 630.23 1841.90 C659.25 1822.56 692.50 1807.77 720.91 1808.88 C749.33 1809.99 779.40 1848.52 807.82 1848.85 C836.23 1849.17 869.49 1809.83 898.51 1810.92 C927.52 1812.00 960.17 1847.55 989.19 1855.62 C1018.21 1863.69 1050.86 1875.14 1079.88 1861.38 C1108.90 1847.61 1141.54 1763.94 1170.56 1769.60 C1199.58 1775.26 1232.23 1875.55 1261.25 1896.77 C1290.27 1917.98 1322.91 1938.82 1351.93 1902.19 C1380.95 1865.56 1413.60 1682.38 1442.62 1667.83 C1471.64 1653.28 1504.28 1805.40 1533.30 1811.25 C1562.32 1817.11 1594.97 1703.10 1623.99 1704.41 C1653.01 1705.71 1685.66 1812.93 1714.67 1819.38 C1743.69 1825.83 1776.34 1731.86 1805.36 1744.71 C1834.38 1757.55 1867.03 1879.65 1896.05 1899.65 C1925.06 1919.64 1957.71 1876.85 1986.73 1869.67 C2015.75 1862.49 2048.40 1868.29 2077.42 1854.77 C2106.44 1841.25 2139.08 1791.57 2168.10 1785.18 C2197.12 1778.78 2229.77 1832.10 2258.79 1814.81 C2287.81 1797.53 2320.45 1668.47 2349.47 1677.14 C2378.49 1685.81 2411.14 1855.50 2440.16 1869.00 C2469.18 1882.49 2501.82 1770.33 2530.84 1761.47 C2559.86 1752.61 2592.51 1803.55 2621.53 1813.63 C2650.55 1823.70 2683.20 1844.13 2712.21 1824.46 C2741.23 1804.79 2802.90 1690.69 2802.90 1690.69 L2802.90 1949.60 L176.80 1949.60 Z" fill="#5cb766" fill-opacity="0.2"/>
<path d="M176.80 1704.41 C176.80 1704.41 238.47 1830.70 267.49 1853.08 C296.50 1875.46 329.15 1842.46 358.17 1844.27 C387.19 1846.09 419.84 1850.74 448.86 1864.43 C477.88 1878.11 510.52 1933.39 539.54 1929.79 C568.56 1926.18 601.21 1861.25 630.23 1841.90 C659.25 1822.56 692.50 1807.77 720.91 1808.88 C749.33 1809.99 779.40 1848.52 807.82 1848.85 C836.23 1849.17 869.49 1809.83 898.51 1810.92 C927.52 1812.00 960.17 1847.55 989.19 1855.62 C1018.21 1863.69 1050.86 1875.14 1079.88 1861.38 C1108.90 1847.61 1141.54 1763.94 1170.56 1769.60 C1199.58 1775.26 1232.23 1875.55 1261.25 1896.77 C1290.27 1917.98 1322.91 1938.82 1351.93 1902.19 C1380.95 1865.56 1413.60 1682.38 1442.62 1667.83 C1471.64 1653.28 1504.28 1805.40 1533.30 1811.25 C1562.32 1817.11 1594.97 1703.10 1623.99 1704.41 C1653.01 1705.71 1685.66 1812.93 1714.67 1819.38 C1743.69 1825.83 1776.34 1731.86 1805.36 1744.71 C1834.38 1757.55 1867.03 1879.65 1896.05 1899.65 C1925.06 1919.64 1957.71 1876.85 1986.73 1869.67 C2015.75 1862.49 2048.40 1868.29 2077.42 1854.77 C2106.44 1841.25 2139.08 1791.57 2168.10 1785.18 C2197.12 1778.78 2229.77 1832.10 2258.79 1814.81 C2287.81 1797.53 2320.45 1668.47 2349.47 1677.14 C2378.49 1685.81 2411.14 1855.50 2440.16 1869.00 C2469.18 1882.49 2501.82 1770.33 2530.84 1761.47 C2559.86 1752.61 2592.51 1803.55 2621.53 1813.63 C2650.55 1823.70 2683.20 1844.13 2712.21 1824.46 C2741.23 1804.79 2802.90 1690.69 2802.90 1690.69" fill="none" stroke="#5cb766" stroke-width="4" stroke-linejoin="round"/>
<circle cx="176.80" cy="1704.41" r="6.75" fill="#5cb766" stroke="#fff" stroke-width="3.5"/>
<circle cx="267.49" cy="1853.08" r="6.75" fill="#5cb766" stroke="#fff" stroke-width="3.5"/>
<circle cx="358.17" cy="1844.27" r="6.75" fill="#5cb766" stroke="#fff" stroke-width="3.5"/>
<circle cx="448.86" cy="1864.43" r="6.75" fill="#5cb766" stroke="#fff" stroke-width="3.5"/>
<circle cx="539.54" cy="1929.79" r="6.75" fill="#5cb766" stroke="#fff" stroke-width="3.5"/>
<circle cx="630.23" cy="1841.90" r="6.75" fill="#5cb766" stroke="#fff" stroke-width="3.5"/>
<circle cx="720.91" cy="1808.88" r="6.75" fill="#5cb766" stroke="#fff" stroke-width="3.5"/>
<circle cx="807.82" cy="1848.85" r="6.75" fill="#5cb766" stroke="#fff" stroke-width="3.5"/>
<circle cx="898.51" cy="1810.92" r="6.75" fill="#5cb766" stroke="#fff" stroke-width="3.5"/>
<circle cx="989.19" cy="1855.62" r="6.75" fill="#5cb766" stroke="#fff" stroke-width="3.5"/>
<circle cx="1079.88" cy="1861.38" r="6.75" fill="#5cb766" stroke="#fff" stroke-width="3.5"/>
<circle cx="1170.56" cy="1769.60" r="6.75" fill="#5cb766" stroke="#fff" stroke-width="3.5"/>
<circle cx="1261.25" cy="1896.77" r="6.75" fill="#5cb766" stroke="#fff" stroke-width="3.5"/>
<circle cx="1351.93" cy="1902.19" r="6.75" fill="#5cb766" stroke="#fff" stroke-width="3.5"/>
<circle cx="1442.62" cy="1667.83" r="6.75" fill="#5cb766" stroke="#fff" stroke-width="3.5"/>
<circle cx="1533.30" cy="1811.25" r="6.75" fill="#5cb766" stroke="#fff" stroke-width="3.5"/>
<circle cx="1623.99" cy="1704.41" r="6.75" fill="#5cb766" stroke="#fff" stroke-width="3.5"/>
<circle cx="1714.67" cy="1819.38" r="6.75" fill="#5cb766" stroke="#fff" stroke-width="3.5"/>
<circle cx="1805.36" cy="1744.71" r="6.75" fill="#5cb766" stroke="#fff" stroke-width="3.5"/>
<circle cx="1896.05" cy="1899.65" r="6.75" fill="#5cb766" stroke="#fff" stroke-width="3.5"/>
<circle cx="1986.73" cy="1869.67" r="6.75" fill="#5cb766" stroke="#fff" stroke-width="3.5"/>
<circle cx="2077.42" cy="1854.77" r="6.75" fill="#5cb766" stroke="#fff" stroke-width="3.5"/>
<circle cx="2168.10" cy="1785.18" r="6.75" fill="#5cb766" stroke="#fff" stroke-width="3.5"/>
<circle cx="2258.79" cy="1814.81" r="6.75" fill="#5cb766" stroke="#fff" stroke-width="3.5"/>
<circle cx="2349.47" cy="1677.14" r="6.75" fill="#5cb766" stroke="#fff" stroke-width="3.5"/>
<circle cx="2440.16" cy="1869.00" r="6.75" fill="#5cb766" stroke="#fff" stroke-width="3.5"/>
<circle cx="2530.84" cy="1761.47" r="6.75" fill="#5cb766" stroke="#fff" stroke-width="3.5"/>
<circle cx="2621.53" cy="1813.63" r="6.75" fill="#5cb766" stroke="#fff" stroke-width="3.5"/>
<circle cx="2712.21" cy="1824.46" r="6.75" fill="#5cb766" stroke="#fff" stroke-width="3.5"/>
<circle cx="2802.90" cy="1690.69" r="6.75" fill="#5cb766" stroke="#fff" stroke-width="3.5"/>
<path d="M176.80 1815.15 C176.80 1815.15 238.47 1847.30 267.49 1846.14 C296.50 1844.97 329.15 1811.09 358.17 1807.87 C387.19 1804.64 419.84 1828.43 448.86 1825.99 C477.88 1823.55 510.52 1801.27 539.54 1792.63 C568.56 1783.99 601.21 1771.05 630.23 1771.97 C659.25 1772.89 692.50 1793.26 720.91 1798.39 C749.33 1803.51 779.40 1793.89 807.82 1803.97 C836.23 1814.05 869.49 1873.03 898.51 1861.38 C927.52 1849.73 960.17 1757.14 989.19 1731.16 C1018.21 1705.18 1050.86 1685.79 1079.88 1698.99 C1108.90 1712.18 1141.54 1787.62 1170.56 1813.63 C1199.58 1839.63 1232.23 1879.35 1261.25 1861.55 C1290.27 1843.75 1322.91 1705.00 1351.93 1702.37 C1380.95 1699.75 1413.60 1824.04 1442.62 1845.12 C1471.64 1866.20 1504.28 1848.69 1533.30 1834.11 C1562.32 1819.54 1594.97 1753.64 1623.99 1754.02 C1653.01 1754.40 1685.66 1823.05 1714.67 1836.49 C1743.69 1849.92 1776.34 1827.80 1805.36 1838.01 C1834.38 1848.22 1867.03 1905.17 1896.05 1900.32 C1925.06 1895.47 1957.71 1825.01 1986.73 1807.70 C2015.75 1790.39 2048.40 1783.53 2077.42 1792.12 C2106.44 1800.71 2139.08 1846.88 2168.10 1861.38 C2197.12 1875.87 2229.77 1886.45 2258.79 1882.71 C2287.81 1878.97 2320.45 1840.39 2349.47 1838.01 C2378.49 1835.63 2411.14 1879.00 2440.16 1867.81 C2469.18 1856.62 2501.82 1772.03 2530.84 1768.07 C2559.86 1764.12 2592.51 1839.59 2621.53 1843.09 C2650.55 1846.58 2683.20 1790.11 2712.21 1789.92 C2741.23 1789.73 2802.90 1841.90 2802.90 1841.90 L2802.90 1949.60 L176.80 1949.60 Z" fill="#a1e3e3" fill-opacity="0.2"/>
<path d="M176.80 1815.15 C176.80 1815.15 238.47 1847.30 267.49 1846.14 C296.50 1844.97 329.15 1811.09 358.17 1807.87 C387.19 1804.64 419.84 1828.43 448.86 1825.99 C477.88 1823.55 510.52 1801.27 539.54 1792.63 C568.56 1783.99 601.21 1771.05 630.23 1771.97 C659.25 1772.89 692.50 1793.26 720.91 1798.39 C749.33 1803.51 779.40 1793.89 807.82 1803.97 C836.23 1814.05 869.49 1873.03 898.51 1861.38 C927.52 1849.73 960.17 1757.14 989.19 1731.16 C1018.21 1705.18 1050.86 1685.79 1079.88 1698.99 C1108.90 1712.18 1141.54 1787.62 1170.56 1813.63 C1199.58 1839.63 1232.23 1879.35 1261.25 1861.55 C1290.27 1843.75 1322.91 1705.00 1351.93 1702.37 C1380.95 1699.75 1413.60 1824.04 1442.62 1845.12 C1471.64 1866.20 1504.28 1848.69 1533.30 1834.11 C1562.32 1819.54 1594.97 1753.64 1623.99 1754.02 C1653.01 1754.40 1685.66 1823.05 1714.67 1836.49 C1743.69 1849.92 1776.34 1827.80 1805.36 1838.01 C1834.38 1848.22 1867.03 1905.17 1896.05 1900.32 C1925.06 1895.47 1957.71 1825.01 1986.73 1807.70 C2015.75 1790.39 2048.40 1783.53 2077.42 1792.12 C2106.44 1800.71 2139.08 1846.88 2168.10 1861.38 C2197.12 1875.87 2229.77 1886.45 2258.79 1882.71 C2287.81 1878.97 2320.45 1840.39 2349.47 1838.01 C2378.49 1835.63 2411.14 1879.00 2440.16 1867.81 C2469.18 1856.62 2501.82 1772.03 2530.84 1768.07 C2559.86 1764.12 2592.51 1839.59 2621.53 1843.09 C2650.55 1846.58 2683.20 1790.11 2712.21 1789.92 C2741.23 1789.73 2802.90 1841.90 2802.90 1841.90" fill="none" stroke="#a1e3e3" stroke-width="4" stroke-linejoin="round"/>
<circle cx="176.80" cy="1815.15" r="6.75" fill="#a1e3e3" stroke="#fff" stroke-width="3.5"/>
<circle cx="267.49" cy="1846.14" r="6.75" fill="#a1e3e3" stroke="#fff" stroke-width="3.5"/>
<circle cx="358.17" cy="1807.87" r="6.75" fill="#a1e3e3" stroke="#fff" stroke-width="3.5"/>
<circle cx="448.86" cy="1825.99" r="6.75" fill="#a1e3e3" stroke="#fff" stroke-width="3.5"/>
<circle cx="539.54" cy="1792.63" r="6.75" fill="#a1e3e3" stroke="#fff" stroke-width="3.5"/>
<circle cx="630.23" cy="1771.97" r="6.75" fill="#a1e3e3" stroke="#fff" stroke-width="3.5"/>
<circle cx="720.91" cy="1798.39" r="6.75" fill="#a1e3e3" stroke="#fff" stroke-width="3.5"/>
<circle cx="807.82" cy="1803.97" r="6.75" fill="#a1e3e3" stroke="#fff" stroke-width="3.5"/>
<circle cx="898.51" cy="1861.38" r="6.75" fill="#a1e3e3" stroke="#fff" stroke-width="3.5"/>
<circle cx="989.19" cy="1731.16" r="6.75" fill="#a1e3e3" stroke="#fff" stroke-width="3.5"/>
<circle cx="1079.88" cy="1698.99" r="6.75" fill="#a1e3e3" stroke="#fff" stroke-width="3.5"/>
<circle cx="1170.56" cy="1813.63" r="6.75" fill="#a1e3e3" stroke="#fff" stroke-width="3.5"/>
<circle cx="1261.25" cy="1861.55" r="6.75" fill="#a1e3e3" stroke="#fff" stroke-width="3.5"/>
<circle cx="1351.93" cy="1702.37" r="6.75" fill="#a1e3e3" stroke="#fff" stroke-width="3.5"/>
<circle cx="1442.62" cy="1845.12" r="6.75" fill="#a1e3e3" stroke="#fff" stroke-width="3.5"/>
<circle cx="1533.30" cy="1834.11" r="6.75" fill="#a1e3e3" stroke="#fff" stroke-width="3.5"/>
<circle cx="1623.99" cy="1754.02" r="6.75" fill="#a1e3e3" stroke="#fff" stroke-width="3.5"/>
<circle cx="1714.67" cy="1836.49" r="6.75" fill="#a1e3e3" stroke="#fff" stroke-width="3.5"/>
<circle cx="1805.36" cy="1838.01" r="6.75" fill="#a1e3e3" stroke="#fff" stroke-width="3.5"/>
<circle cx="1896.05" cy="1900.32" r="6.75" fill="#a1e3e3" stroke="#fff" stroke-width="3.5"/>
<circle cx="1986.73" cy="1807.70" r="6.75" fill="#a1e3e3" stroke="#fff" stroke-width="3.5"/>
<circle cx="2077.42" cy="1792.12" r="6.75" fill="#a1e3e3" stroke="#fff" stroke-width="3.5"/>
<circle cx="2168.10" cy="1861.38" r="6.75" fill="#a1e3e3" stroke="#fff" stroke-width="3.5"/>
<circle cx="2258.79" cy="1882.71" r="6.75" fill="#a1e3e3" stroke="#fff" stroke-width="3.5"/>
<circle cx="2349.47" cy="1838.01" r="6.75" fill="#a1e3e3" stroke="#fff" stroke-width="3.5"/>
<circle cx="2440.16" cy="1867.81" r="6.75" fill="#a1e3e3" stroke="#fff" stroke-width="3.5"/>
<circle cx="2530.84" cy="1768.07" r="6.75" fill="#a1e3e3" stroke="#fff" stroke-width="3.5"/>
<circle cx="2621.53" cy="1843.09" r="6.75" fill="#a1e3e3" stroke="#fff" stroke-width="3.5"/>
<circle cx="2712.21" cy="1789.92" r="6.75" fill="#a1e3e3" stroke="#fff" stroke-width="3.5"/>
<circle cx="2802.90" cy="1841.90" r="6.75" fill="#a1e3e3" stroke="#fff" stroke-width="3.5"/>
<path d="M176.80 1872.21 C176.80 1872.21 238.47 1859.92 267.49 1858.84 C296.50 1857.75 329.15 1860.62 358.17 1865.44 C387.19 1870.26 419.84 1887.65 448.86 1888.98 C477.88 1890.31 510.52 1876.42 539.54 1873.74 C568.56 1871.06 601.21 1878.18 630.23 1872.21 C659.25 1866.25 692.50 1839.98 720.91 1836.49 C749.33 1832.99 779.40 1849.94 807.82 1850.37 C836.23 1850.80 869.49 1833.69 898.51 1839.19 C927.52 1844.69 960.17 1883.80 989.19 1884.75 C1018.21 1885.69 1050.86 1843.96 1079.88 1845.12 C1108.90 1846.29 1141.54 1890.27 1170.56 1892.03 C1199.58 1893.79 1232.23 1863.42 1261.25 1856.13 C1290.27 1848.84 1322.91 1841.41 1351.93 1846.48 C1380.95 1851.54 1413.60 1885.90 1442.62 1887.79 C1471.64 1889.69 1504.28 1860.74 1533.30 1858.33 C1562.32 1855.92 1594.97 1873.62 1623.99 1872.72 C1653.01 1871.83 1685.66 1851.01 1714.67 1852.74 C1743.69 1854.48 1776.34 1870.80 1805.36 1883.56 C1834.38 1896.32 1867.03 1936.48 1896.05 1932.50 C1925.06 1928.51 1957.71 1858.10 1986.73 1858.67 C2015.75 1859.24 2048.40 1928.33 2077.42 1936.05 C2106.44 1943.77 2139.08 1909.23 2168.10 1906.93 C2197.12 1904.63 2229.77 1923.53 2258.79 1921.66 C2287.81 1919.79 2320.45 1892.26 2349.47 1895.24 C2378.49 1898.22 2411.14 1937.09 2440.16 1940.29 C2469.18 1943.48 2501.82 1918.83 2530.84 1915.23 C2559.86 1911.62 2592.51 1915.57 2621.53 1917.77 C2650.55 1919.96 2683.20 1930.19 2712.21 1928.94 C2741.23 1927.70 2802.90 1909.98 2802.90 1909.98 L2802.90 1949.60 L176.80 1949.60 Z" fill="#8b3ff4" fill-opacity="0.2"/>
<path d="M176.80 1872.21 C176.80 1872.21 238.47 1859.92 267.49 1858.84 C296.50 1857.75 329.15 1860.62 358.17 1865.44 C387.19 1870.26 419.84 1887.65 448.86 1888.98 C477.88 1890.31 510.52 1876.42 539.54 1873.74 C568.56 1871.06 601.21 1878.18 630.23 1872.21 C659.25 1866.25 692.50 1839.98 720.91 1836.49 C749.33 1832.99 779.40 1849.94 807.82 1850.37 C836.23 1850.80 869.49 1833.69 898.51 1839.19 C927.52 1844.69 960.17 1883.80 989.19 1884.75 C1018.21 1885.69 1050.86 1843.96 1079.88 1845.12 C1108.90 1846.29 1141.54 1890.27 1170.56 1892.03 C1199.58 1893.79 1232.23 1863.42 1261.25 1856.13 C1290.27 1848.84 1322.91 1841.41 1351.93 1846.48 C1380.95 1851.54 1413.60 1885.90 1442.62 1887.79 C1471.64 1889.69 1504.28 1860.74 1533.30 1858.33 C1562.32 1855.92 1594.97 1873.62 1623.99 1872.72 C1653.01 1871.83 1685.66 1851.01 1714.67 1852.74 C1743.69 1854.48 1776.34 1870.80 1805.36 1883.56 C1834.38 1896.32 1867.03 1936.48 1896.05 1932.50 C1925.06 1928.51 1957.71 1858.10 1986.73 1858.67 C2015.75 1859.24 2048.40 1928.33 2077.42 1936.05 C2106.44 1943.77 2139.08 1909.23 2168.10 1906.93 C2197.12 1904.63 2229.77 1923.53 2258.79 1921.66 C2287.81 1919.79 2320.45 1892.26 2349.47 1895.24 C2378.49 1898.22 2411.14 1937.09 2440.16 1940.29 C2469.18 1943.48 2501.82 1918.83 2530.84 1915.23 C2559.86 1911.62 2592.51 1915.57 2621.53 1917.77 C2650.55 1919.96 2683.20 1930.19 2712.21 1928.94 C2741.23 1927.70 2802.90 1909.98 2802.90 1909.98" fill="none" stroke="#8b3ff4" stroke-width="4" stroke-linejoin="round"/>
<circle cx="176.80" cy="1872.21" r="6.75" fill="#8b3ff4" stroke="#fff" stroke-width="3.5"/>
<circle cx="267.49" cy="1858.84" r="6.75" fill="#8b3ff4" stroke="#fff" stroke-width="3.5"/>
<circle cx="358.17" cy="1865.44" r="6.75" fill="#8b3ff4" stroke="#fff" stroke-width="3.5"/>
<circle cx="448.86" cy="1888.98" r="6.75" fill="#8b3ff4" stroke="#fff" stroke-width="3.5"/>
<circle cx="539.54" cy="1873.74" r="6.75" fill="#8b3ff4" stroke="#fff" stroke-width="3.5"/>
<circle cx="630.23" cy="1872.21" r="6.75" fill="#8b3ff4" stroke="#fff" stroke-width="3.5"/>
<circle cx="720.91" cy="1836.49" r="6.75" fill="#8b3ff4" stroke="#fff" stroke-width="3.5"/>
<circle cx="807.82" cy="1850.37" r="6.75" fill="#8b3ff4" stroke="#fff" stroke-width="3.5"/>
<circle cx="898.51" cy="1839.19" r="6.75" fill="#8b3ff4" stroke="#fff" stroke-width="3.5"/>
<circle cx="989.19" cy="1884.75" r="6.75" fill="#8b3ff4" stroke="#fff" stroke-width="3.5"/>
<circle cx="1079.88" cy="1845.12" r="6.75" fill="#8b3ff4" stroke="#fff" stroke-width="3.5"/>
<circle cx="1170.56" cy="1892.03" r="6.75" fill="#8b3ff4" stroke="#fff" stroke-width="3.5"/>
<circle cx="1261.25" cy="1856.13" r="6.75" fill="#8b3ff4" stroke="#fff" stroke-width="3.5"/>
<circle cx="1351.93" cy="1846.48" r="6.75" fill="#8b3ff4" stroke="#fff" stroke-width="3.5"/>
<circle cx="1442.62" cy="1887.79" r="6.75" fill="#8b3ff4" stroke="#fff" stroke-width="3.5"/>
<circle cx="1533.30" cy="1858.33" r="6.75" fill="#8b3ff4" stroke="#fff" stroke-width="3.5"/>
<circle cx="1623.99" cy="1872.72" r="6.75" fill="#8b3ff4" stroke="#fff" stroke-width="3.5"/>
<circle cx="1714.67" cy="1852.74" r="6.75" fill="#8b3ff4" stroke="#fff" stroke-width="3.5"/>
<circle cx="1805.36" cy="1883.56" r="6.75" fill="#8b3ff4" stroke="#fff" stroke-width="3.5"/>
<circle cx="1896.05" cy="1932.50" r="6.75" fill="#8b3ff4" stroke="#fff" stroke-width="3.5"/>
<circle cx="1986.73" cy="1858.67" r="6.75" fill="#8b3ff4" stroke="#fff" stroke-width="3.5"/>
<circle cx="2077.42" cy="1936.05" r="6.75" fill="#8b3ff4" stroke="#fff" stroke-width="3.5"/>
<circle cx="2168.10" cy="1906.93" r="6.75" fill="#8b3ff4" stroke="#fff" stroke-width="3.5"/>
<circle cx="2258.79" cy="1921.66" r="6.75" fill="#8b3ff4" stroke="#fff" stroke-width="3.5"/>
<circle cx="2349.47" cy="1895.24" r="6.75" fill="#8b3ff4" stroke="#fff" stroke-width="3.5"/>
<circle cx="2440.16" cy="1940.29" r="6.75" fill="#8b3ff4" stroke="#fff" stroke-width="3.5"/>
<circle cx="2530.84" cy="1915.23" r="6.75" fill="#8b3ff4" stroke="#fff" stroke-width="3.5"/>
<circle cx="2621.53" cy="1917.77" r="6.75" fill="#8b3ff4" stroke="#fff" stroke-width="3.5"/>
<circle cx="2712.21" cy="1928.94" r="6.75" fill="#8b3ff4" stroke="#fff" stroke-width="3.5"/>
<circle cx="2802.90" cy="1909.98" r="6.75" fill="#8b3ff4" stroke="#fff" stroke-width="3.5"/>
</svg>
<div class="t" style="left:119.08px;top:1939.58px;font-size:20.00px;line-height:20.00px;letter-spacing:0.000px;color:#8c9092;font-weight:400;">0</div>
<div class="t" style="left:96.84px;top:1854.91px;font-size:20.00px;line-height:20.00px;letter-spacing:0.000px;color:#8c9092;font-weight:400;">500</div>
<div class="t" style="left:85.70px;top:1770.25px;font-size:20.00px;line-height:20.00px;letter-spacing:0.000px;color:#8c9092;font-weight:400;">1000</div>
<div class="t" style="left:85.70px;top:1685.58px;font-size:20.00px;line-height:20.00px;letter-spacing:0.000px;color:#8c9092;font-weight:400;">1500</div>
<div class="t" style="left:85.70px;top:1600.91px;font-size:20.00px;line-height:20.00px;letter-spacing:0.000px;color:#8c9092;font-weight:400;">2000</div>
<div class="t" style="left:85.70px;top:1516.25px;font-size:20.00px;line-height:20.00px;letter-spacing:0.000px;color:#8c9092;font-weight:400;">2500</div>
<div class="t" style="left:85.70px;top:1431.58px;font-size:20.00px;line-height:20.00px;letter-spacing:0.000px;color:#8c9092;font-weight:400;">3000</div>
<div class="t" style="left:145.68px;top:1965.00px;font-size:20.00px;line-height:20.00px;letter-spacing:0.000px;color:#8c9092;font-weight:400;">24 Mar</div>
<div class="t" style="left:508.42px;top:1965.00px;font-size:20.00px;line-height:20.00px;letter-spacing:0.000px;color:#8c9092;font-weight:400;">28 Mar</div>
<div class="t" style="left:875.16px;top:1965.00px;font-size:20.00px;line-height:20.00px;letter-spacing:0.000px;color:#8c9092;font-weight:400;">1 Apr</div>
<div class="t" style="left:1237.90px;top:1965.00px;font-size:20.00px;line-height:20.00px;letter-spacing:0.000px;color:#8c9092;font-weight:400;">5 Apr</div>
<div class="t" style="left:1600.64px;top:1965.00px;font-size:20.00px;line-height:20.00px;letter-spacing:0.000px;color:#8c9092;font-weight:400;">9 Apr</div>
<div class="t" style="left:1957.82px;top:1965.00px;font-size:20.00px;line-height:20.00px;letter-spacing:0.000px;color:#8c9092;font-weight:400;">13 Apr</div>
<div class="t" style="left:2320.56px;top:1965.00px;font-size:20.00px;line-height:20.00px;letter-spacing:0.000px;color:#8c9092;font-weight:400;">17 Apr</div>
<div class="t" style="left:2683.30px;top:1965.00px;font-size:20.00px;line-height:20.00px;letter-spacing:0.000px;color:#8c9092;font-weight:400;">21 Apr</div>
<div class="bx" style="left:700px;top:2035.7px;width:20px;height:4px;background:#5aa5dc"></div>
<div class="t" style="left:738.15px;top:2025.95px;font-size:25.79px;line-height:25.79px;letter-spacing:0.666px;color:#8b9092;font-weight:400;-webkit-text-stroke:0.30px #8b9092;">Translated, words</div>
<div class="bx" style="left:1036px;top:2035.7px;width:20px;height:4px;background:#5cb766"></div>
<div class="t" style="left:1075.15px;top:2025.95px;font-size:25.79px;line-height:25.79px;letter-spacing:0.560px;color:#8b9092;font-weight:400;-webkit-text-stroke:0.30px #8b9092;">Translated by TM, words</div>
<div class="bx" style="left:1453px;top:2035.7px;width:20px;height:4px;background:#a1e3e3"></div>
<div class="t" style="left:1491.15px;top:2025.95px;font-size:25.79px;line-height:25.79px;letter-spacing:0.645px;color:#8b9092;font-weight:400;-webkit-text-stroke:0.30px #8b9092;">Translated by MT, words</div>
<div class="bx" style="left:1868px;top:2035.7px;width:20px;height:4px;background:#8b3ff4"></div>
<div class="t" style="left:1906.15px;top:2025.95px;font-size:25.79px;line-height:25.79px;letter-spacing:0.643px;color:#8b9092;font-weight:400;-webkit-text-stroke:0.30px #8b9092;">Translated by AI, words</div>
</body></html>
